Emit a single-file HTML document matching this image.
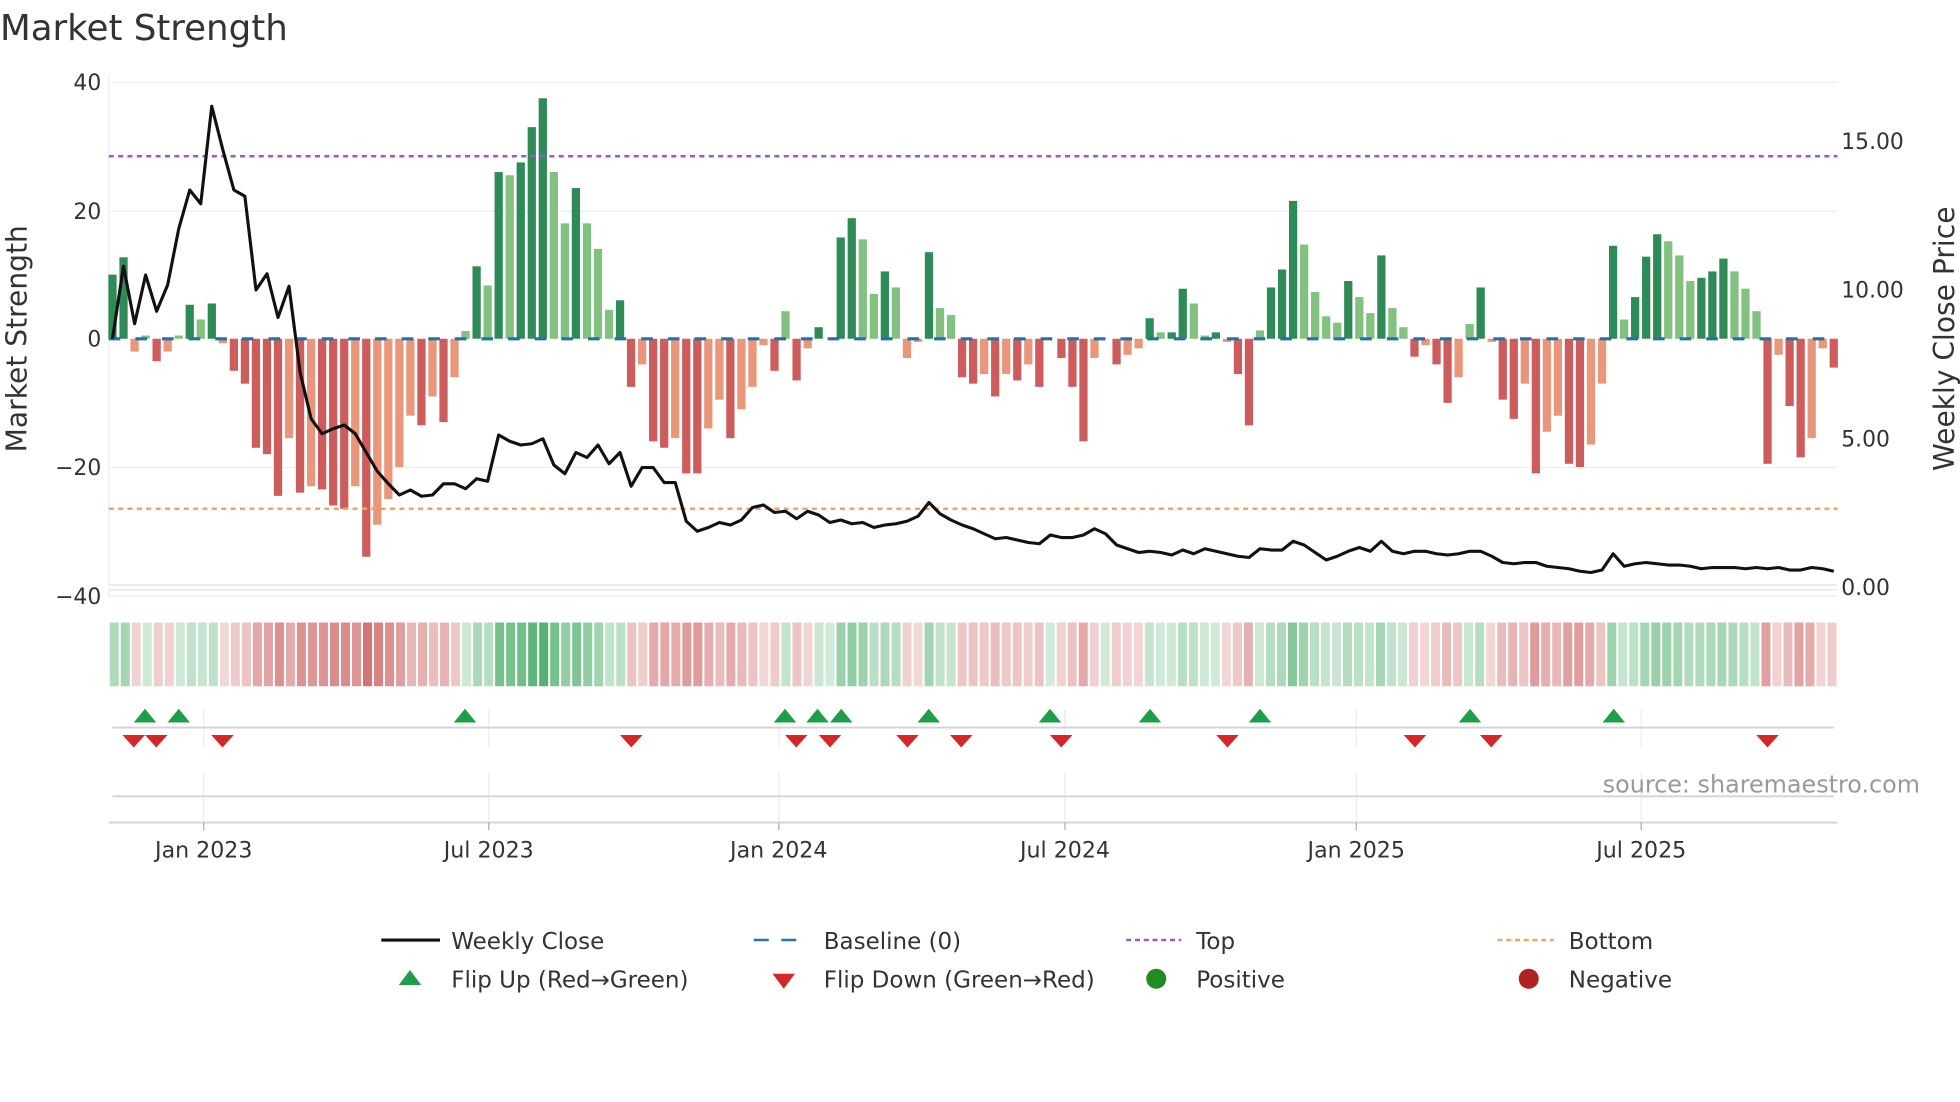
<!DOCTYPE html>
<html><head><meta charset="utf-8"><style>
html,body{margin:0;padding:0;background:#fff;overflow:hidden}
svg{display:block}
text{font-family:"DejaVu Sans","Liberation Sans",sans-serif}
</style></head><body>
<svg id="s" width="1960" height="1102" viewBox="0 0 1568 881.6" xmlns="http://www.w3.org/2000/svg">
<rect width="1568" height="882" fill="#fff"/>
<g id="grid"></g>
<g id="bars"></g>
<g id="over"></g>
<text x="0" y="32" font-size="28.5" fill="#333">Market Strength</text>
<g font-size="17.5" fill="#333" text-anchor="end">
<text x="81" y="72">40</text><text x="81" y="175">20</text><text x="81" y="277">0</text><text x="81" y="380">−20</text><text x="81" y="483">−40</text>
</g>
<g font-size="17.5" fill="#333">
<text x="1473" y="119">15.00</text><text x="1473" y="238">10.00</text><text x="1473" y="357">5.00</text><text x="1473" y="476">0.00</text>
</g>
<text transform="translate(21,271) rotate(-90)" font-size="22.5" fill="#333" text-anchor="middle">Market Strength</text>
<text transform="translate(1563,271) rotate(-90)" font-size="22.5" fill="#333" text-anchor="middle">Weekly Close Price</text>
<g font-size="17.7" fill="#333" text-anchor="middle">
<text x="163" y="686">Jan 2023</text><text x="391" y="686">Jul 2023</text><text x="623" y="686">Jan 2024</text><text x="852" y="686">Jul 2024</text><text x="1085" y="686">Jan 2025</text><text x="1313" y="686">Jul 2025</text>
</g>
<text x="1536" y="634" font-size="19.1" fill="#999" text-anchor="end">source: sharemaestro.com</text>
<g font-size="18.4" fill="#333">
<line x1="305" y1="752" x2="352" y2="752" stroke="#111" stroke-width="2.5"/>
<text x="361" y="759">Weekly Close</text>
<line x1="603" y1="752" x2="647" y2="752" stroke="#1f77b4" stroke-width="2" stroke-dasharray="12 10"/>
<text x="659" y="759">Baseline (0)</text>
<line x1="901" y1="752" x2="945" y2="752" stroke="#9b59d0" stroke-width="2" stroke-dasharray="4 3"/>
<text x="957" y="759">Top</text>
<line x1="1198" y1="752" x2="1243" y2="752" stroke="#f4a261" stroke-width="2" stroke-dasharray="4 3"/>
<text x="1255" y="759">Bottom</text>
<polygon points="319,788 337,788 328,776" fill="#1e9e4a"/>
<text x="361" y="790">Flip Up (Red→Green)</text>
<polygon points="618,779 636,779 627,791" fill="#d62728"/>
<text x="659" y="790">Flip Down (Green→Red)</text>
<circle cx="925" cy="783" r="8" fill="#228b22"/>
<text x="957" y="790">Positive</text>
<circle cx="1223" cy="783" r="8" fill="#b22222"/>
<text x="1255" y="790">Negative</text>
</g>
</svg>
<script>
var NS="http://www.w3.org/2000/svg";
function el(p,t,a){var e=document.createElementNS(NS,t);for(var k in a)e.setAttribute(k,a[k]);p.appendChild(e);return e;}
var v=[10,12.7,-2,0.5,-3.5,-2,0.5,5.3,3,5.5,-0.7,-5,-7,-17,-18,-24.5,-15.5,-24,-23,-23.5,-26,-26.5,-23,-34,-29,-25,-20,-12,-13.5,-9,-13,-6,1.2,11.3,8.3,26,25.5,27.5,33,37.5,26,18,23.5,18,14,4.5,6,-7.5,-4,-16,-17,-15.5,-21,-21,-14,-9.5,-15.5,-11,-7.5,-1,-5,4.3,-6.5,-1.5,1.8,0,15.8,18.8,15.5,7,10.5,8,-3,-0.5,13.5,4.8,3.7,-6,-7,-5.5,-9,-5.5,-6.5,-4,-7.5,0,-3,-7.5,-16,-3,0,-4,-2.5,-1.5,3.2,1,1,7.8,5.5,0.5,1,-0.5,-5.5,-13.5,1.3,8,10.8,21.5,14.7,7.3,3.5,2.5,9,6.5,4,13,4.8,1.8,-2.8,-1,-4,-10,-6,2.3,8,-0.5,-9.5,-12.5,-7,-21,-14.5,-12,-19.5,-20,-16.5,-7,14.5,3,6.5,12.8,16.3,15.2,13,9,9.5,10.5,12.5,10.5,7.8,4.3,-19.5,-2.5,-10.5,-18.5,-15.5,-1.5,-4.5];
var ly=[271,213,259,220,249,228,183,152,163,85,120,152,157,232,219,254,229,298,335,347,343,340,347,362,377,387,396,392,397,396,387,387,391,383,385,348,353,356,355,351,372,379,362,366,356,371,362,389,374,374,386,386,417,425,422,418,420,416,406,404,410,409,415,409,412,418,416,419,418,422,420,419,417,413,402,411,416,420,423,427,431,430,432,434,435,428,430,430,428,423,427,436,439,442,441,442,444,440,443,439,441,443,445,446,439,440,440,433,436,442,448,445,441,438,441,433,441,443,441,441,443,444,443,441,441,445,450,451,450,450,453,454,455,457,458,456,443,453,451,450,451,452,452,453,455,454,454,454,455,454,455,454,456,456,454,455,457];
var N=v.length, x0=90, dx=(1467-90)/(N-1), z=271, k=5.13;
var g=document.getElementById('grid'), b=document.getElementById('bars'), o=document.getElementById('over');
[66,169,374,477].forEach(function(y){el(g,'line',{x1:87,x2:1470,y1:y,y2:y,stroke:'#eceef2','stroke-width':1});});
el(g,'line',{x1:87,x2:1470,y1:468,y2:468,stroke:'#e3e7f0','stroke-width':1.2});
el(g,'line',{x1:87,x2:1470,y1:472,y2:472,stroke:'#e3e7f0','stroke-width':1.2});
el(g,'line',{x1:87,x2:87,y1:60,y2:477,stroke:'#eceef2','stroke-width':1});
var prev=0;
for(var i=0;i<N;i++){
  var x=x0+i*dx, val=v[i], h=Math.abs(val)*k;
  var strong = Math.abs(val)>=Math.abs(prev);
  var c = val>=0 ? (strong?'#2e8b57':'#82c17f') : (strong?'#cd5c5c':'#e9967a');
  if(val>=0) el(b,'rect',{x:x-3.3,y:z-h,width:6.6,height:h,fill:c});
  else el(b,'rect',{x:x-3.3,y:z,width:6.6,height:h,fill:c});
  prev=val;
  var a=0.22+0.6*Math.min(Math.abs(val)/36,1);
  var hc = val>=0 ? 'rgba(46,160,80,'+a+')' : 'rgba(200,80,80,'+a+')';
  el(b,'rect',{x:87+i*((1470-87)/N)+0.8,y:498,width:(1470-87)/N-1.6,height:51,fill:hc});
}
el(o,'line',{x1:87,x2:1470,y1:z,y2:z,stroke:'#2272a8','stroke-width':2.5,'stroke-dasharray':'9.3 12'});
el(o,'line',{x1:87,x2:1470,y1:125,y2:125,stroke:'#9b59d0','stroke-width':2,'stroke-dasharray':'4 3.5'});
el(o,'line',{x1:87,x2:1470,y1:407,y2:407,stroke:'#f4a261','stroke-width':2,'stroke-dasharray':'4 3.5'});
var pts=[];for(var i=0;i<ly.length;i++)pts.push((x0+i*dx).toFixed(1)+','+ly[i]);
el(o,'polyline',{points:pts.join(' '),fill:'none',stroke:'#111','stroke-width':2.5,'stroke-linejoin':'round'});
var dates=[163,391,623,852,1085,1313];
dates.forEach(function(x){
  el(g,'line',{x1:x,x2:x,y1:568,y2:598,stroke:'#e8ebf0','stroke-width':1});
  el(g,'line',{x1:x,x2:x,y1:618,y2:658,stroke:'#e8ebf0','stroke-width':1});
  el(o,'line',{x1:x,x2:x,y1:658,y2:664,stroke:'#aaa','stroke-width':1});
});
el(g,'line',{x1:90,x2:1467,y1:582,y2:582,stroke:'#d0d3d8','stroke-width':1.5});
el(g,'line',{x1:90,x2:1467,y1:637,y2:637,stroke:'#d0d3d8','stroke-width':1.5});
el(g,'line',{x1:87,x2:1470,y1:658,y2:658,stroke:'#d0d3d8','stroke-width':1.5});
[116,143,372,628,654,673,743,840,920,1008,1176,1291].forEach(function(x){
  el(o,'polygon',{points:(x-9)+',578 '+(x+9)+',578 '+x+',567',fill:'#1e9e4a'});});
[107,125,178,505,637,664,726,769,849,982,1132,1193,1414].forEach(function(x){
  el(o,'polygon',{points:(x-9)+',588 '+(x+9)+',588 '+x+',598',fill:'#d62728'});});
</script>
</body></html>
